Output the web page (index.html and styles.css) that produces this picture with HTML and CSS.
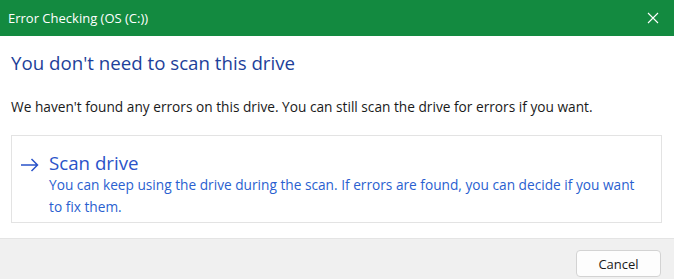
FILE: index.html
```html
<!DOCTYPE html>
<html>
<head>
<meta charset="utf-8">
<link rel="stylesheet" href="styles.css">
</head>
<body>
<div class="dialog">
  <div class="titlebar">
    <span class="title">Error Checking (OS (C:))</span>
    <svg class="close" width="12" height="12" viewBox="0 0 12 12"><path d="M1 1L11 11M11 1L1 11" stroke="#fff" stroke-width="1.1" fill="none"/></svg>
  </div>
  <div class="content">
    <h1 class="heading">You don't need to scan this drive</h1>
    <p class="message">We haven't found any errors on this drive. You can still scan the drive for errors if you want.</p>
    <div class="option">
      <svg class="arrow" width="19" height="14" viewBox="0 0 19 14"><path d="M1 7H17.5M11.5 1L17.5 7L11.5 13" stroke="#2a53c9" stroke-width="1.5" fill="none"/></svg>
      <div class="option-text">
        <div class="option-title">Scan drive</div>
        <div class="option-desc">You can keep using the drive during the scan. If errors are found, you can decide if you want to fix them.</div>
      </div>
    </div>
  </div>
  <div class="footer">
    <button class="btn">Cancel</button>
  </div>
</div>
</body>
</html>
```
FILE: styles.css
```css
html, body { margin: 0; padding: 0; }
body { width: 674px; height: 279px; overflow: hidden; background: #fff; font-family: "Open Sans", "Noto Sans", sans-serif; }
.dialog { display: flex; flex-direction: column; height: 279px; }
.titlebar { height: 36px; background: #138a40; display: flex; align-items: center; justify-content: space-between; padding: 0 15px 0 8px; color: #fff; }
.title { font-size: 13px; }
.close { display: block; }
.content { flex: 1; padding: 0 12px 0 11px; }
.heading { margin: 15px 0 0; font-size: 18.7px; font-weight: normal; color: #1e3f9a; line-height: 24px; }
.message { margin: 23px 0 0; font-size: 13.7px; color: #1a1a1a; line-height: 18px; }
.option { margin-top: 19px; border: 1px solid #e3e3e3; display: flex; padding: 14px 10px 0 8px; height: 88px; box-sizing: border-box; }
.arrow { margin-top: 8px; margin-right: 10px; flex: none; }
.option-title { font-size: 18.7px; color: #2a53c9; line-height: 26px; }
.option-desc { font-size: 13.7px; color: #2a5fd0; line-height: 22px; margin-top: -2px; max-width: 606px; }
.footer { height: 41px; background: #f0f0f0; border-top: 1px solid #e4e4e4; display: flex; justify-content: flex-end; align-items: flex-start; padding: 11px 13px 0 0; box-sizing: border-box; }
.btn { width: 85px; height: 27px; background: #fdfdfd; border: 1px solid #d3d3d3; border-radius: 4px; font-family: inherit; font-size: 13px; color: #1a1a1a; padding: 0; }
```
